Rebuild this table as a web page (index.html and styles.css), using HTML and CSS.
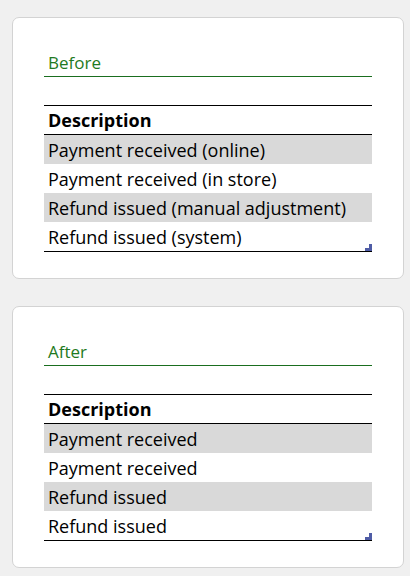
FILE: index.html
```html
<!DOCTYPE html>
<html lang="en">
<head>
    <meta charset="UTF-8">
    <meta name="viewport" content="width=device-width, initial-scale=1.0">
    <title>Before / After</title>
    <link rel="stylesheet" href="styles.css">
</head>
<body>
    <div class="page">
        <div class="card">
            <h2 class="card-title">Before</h2>
            <div class="table-wrap">
                <table class="desc-table">
                    <thead>
                        <tr><th>Description</th></tr>
                    </thead>
                    <tbody>
                        <tr class="shaded"><td>Payment received (online)</td></tr>
                        <tr><td>Payment received (in store)</td></tr>
                        <tr class="shaded"><td>Refund issued (manual adjustment)</td></tr>
                        <tr><td>Refund issued (system)</td></tr>
                    </tbody>
                </table>
                <svg class="resize-mark" width="7" height="7" viewBox="0 0 7 7">
                    <polygon points="4,0 7,0 7,7 0,7 0,4 4,4" fill="#4f5ca6"/>
                </svg>
            </div>
        </div>

        <div class="card">
            <h2 class="card-title">After</h2>
            <div class="table-wrap">
                <table class="desc-table">
                    <thead>
                        <tr><th>Description</th></tr>
                    </thead>
                    <tbody>
                        <tr class="shaded"><td>Payment received</td></tr>
                        <tr><td>Payment received</td></tr>
                        <tr class="shaded"><td>Refund issued</td></tr>
                        <tr><td>Refund issued</td></tr>
                    </tbody>
                </table>
                <svg class="resize-mark" width="7" height="7" viewBox="0 0 7 7">
                    <polygon points="4,0 7,0 7,7 0,7 0,4 4,4" fill="#4f5ca6"/>
                </svg>
            </div>
        </div>
    </div>
</body>
</html>
```

FILE: styles.css
```css
body {
    margin: 0;
    background-color: #f0f0f0;
    font-family: "Open Sans", "Noto Sans", sans-serif;
    color: #000;
}
.page {
    display: flex;
    flex-direction: column;
    gap: 27px;
    padding: 17px 6px 9px 12px;
}
.card {
    background-color: white;
    border: 1px solid #d3d3d3;
    border-radius: 7px;
    padding: 32px 31px 26px;
}
.card-title {
    margin: 0 0 28px;
    padding-left: 4px;
    font-size: 17px;
    font-weight: normal;
    line-height: 26px;
    color: #1f7a22;
    border-bottom: 1px solid #1a6e1f;
}
.table-wrap {
    position: relative;
}
.desc-table {
    width: 100%;
    border-collapse: collapse;
    font-size: 18px;
    line-height: 22px;
    border-top: 1px solid #000;
    border-bottom: 1px solid #000;
}
.desc-table th {
    text-align: left;
    font-weight: bold;
    height: 28px;
    padding: 0 4px;
    border-bottom: 1px solid #000;
}
.desc-table td {
    height: 29px;
    padding: 0 4px;
}
.shaded td {
    background-color: #d9d9d9;
}
.resize-mark {
    position: absolute;
    right: 0;
    bottom: 1px;
    display: block;
}
```
